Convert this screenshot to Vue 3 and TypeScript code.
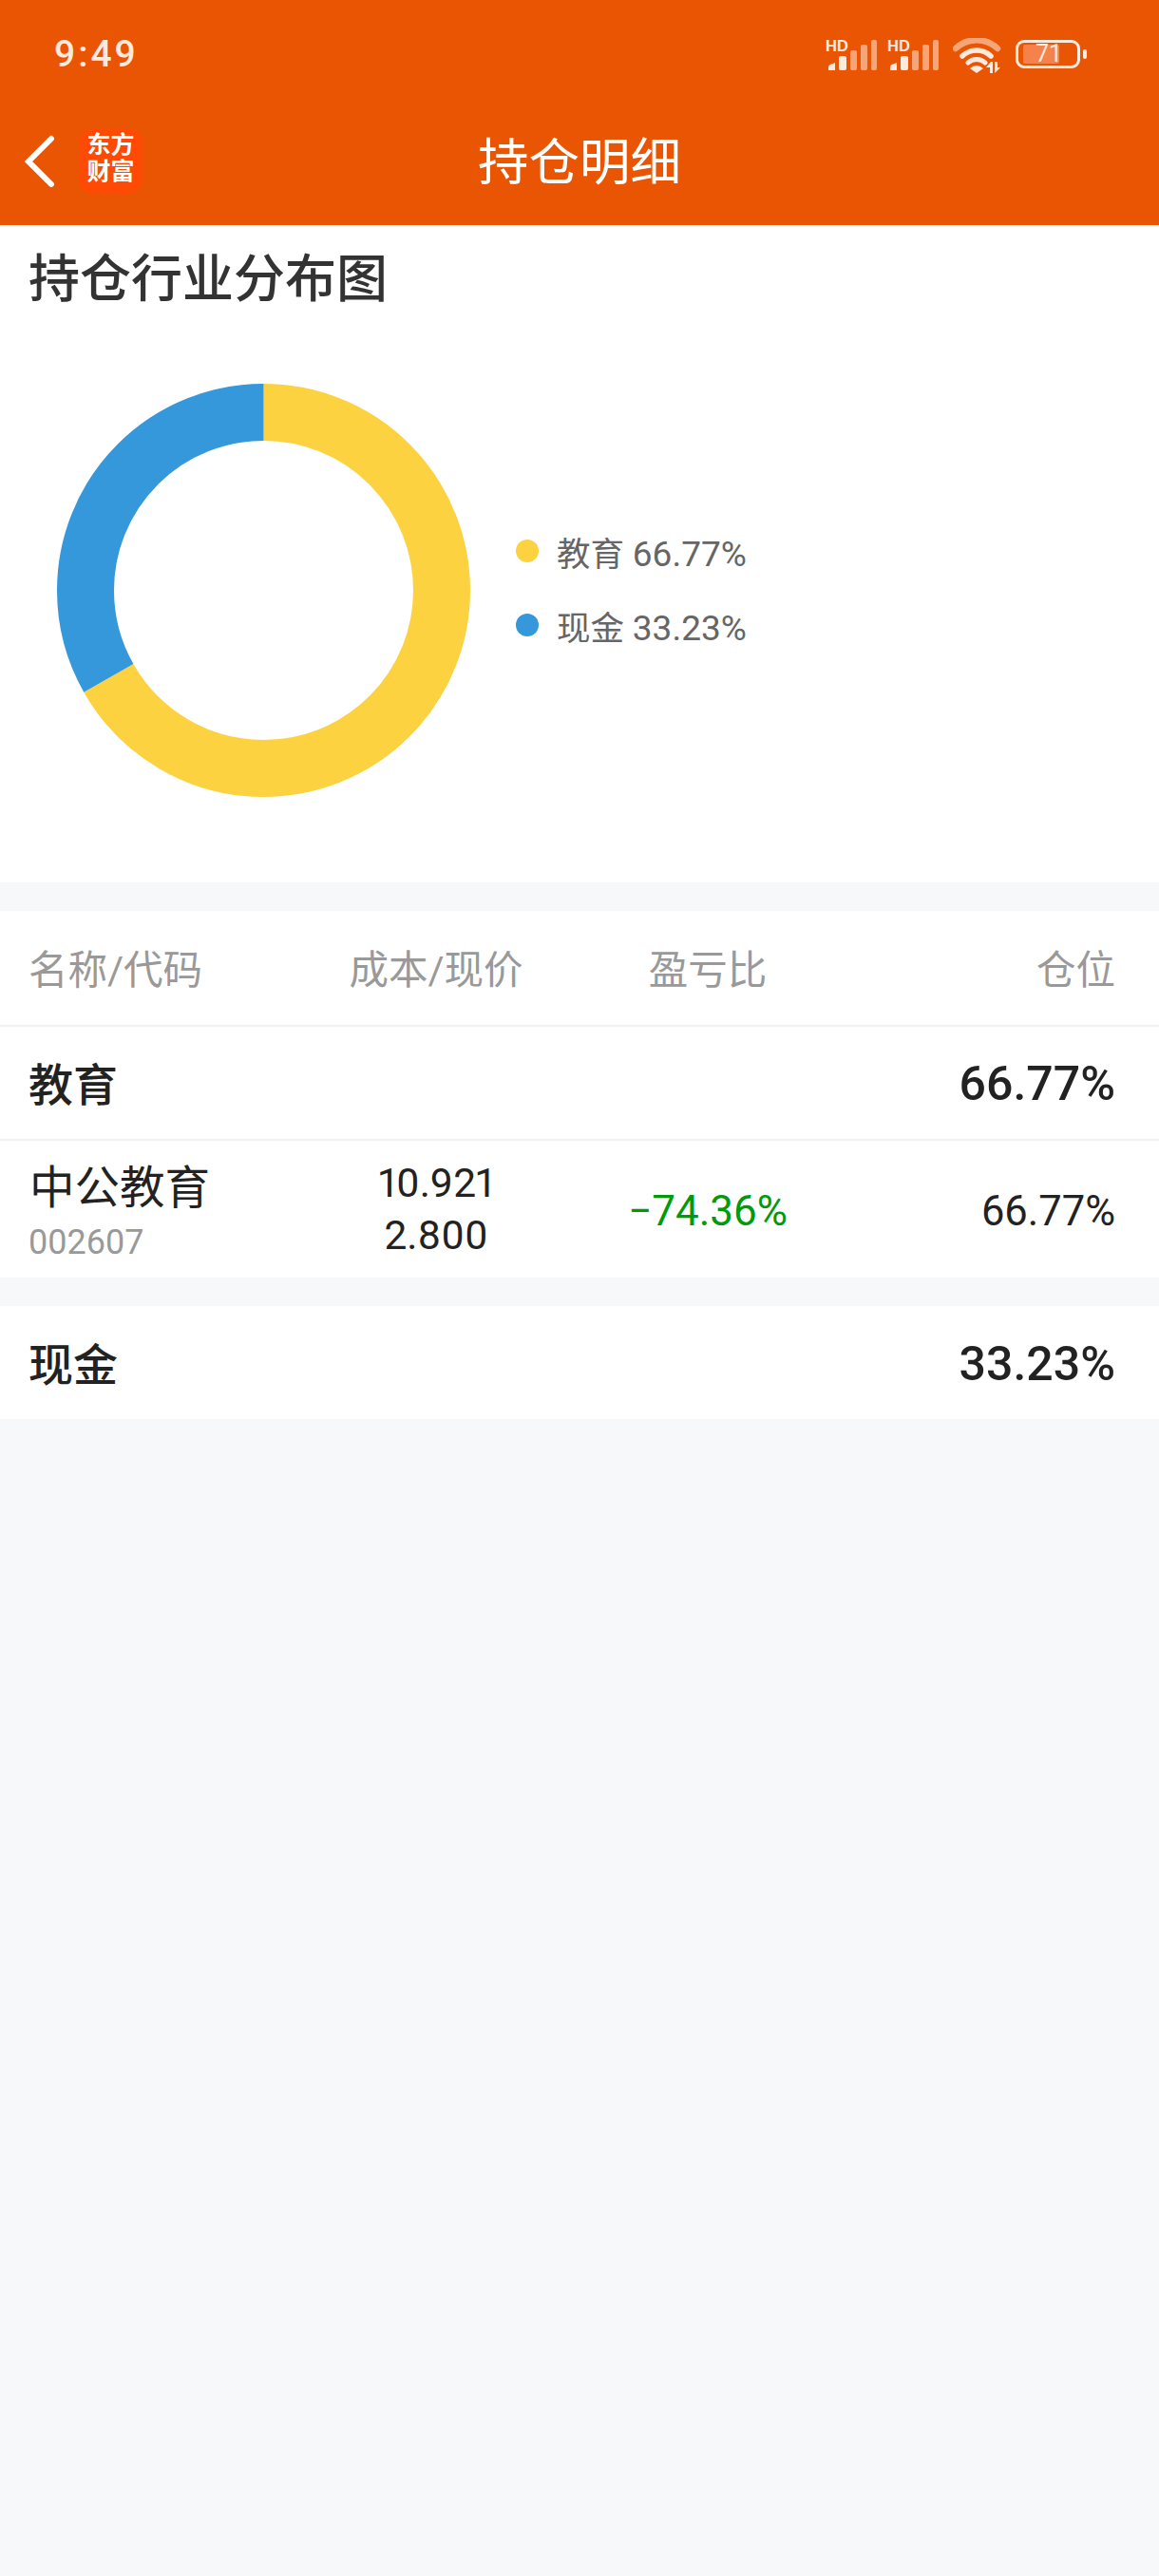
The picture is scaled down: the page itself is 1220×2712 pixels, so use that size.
<script setup lang="ts">
import { computed } from 'vue'

const legend = [
  { name: '教育', pct: 66.77, color: '#fcd240' },
  { name: '现金', pct: 33.23, color: '#3498db' },
]

const R = 187.5
const C = 2 * Math.PI * R
const slices = computed(() => {
  let used = 0
  return legend.map((l) => {
    const len = (l.pct / 100) * C
    const s = { color: l.color, dash: `${len} ${C - len}`, offset: -used }
    used += len
    return s
  })
})
</script>

<template>
  <div class="page">
    <header class="top">
      <div class="status">
        <span class="time">9:49</span>
        <div class="status-icons">
          <svg v-for="n in 2" :key="n" class="signal" width="56" height="34" viewBox="0 0 56 34">
            <text x="0" y="12" class="hd">HD</text>
            <path d="M3 32 V29 Q3 26 6 25.5 L10 24 V32 Z" fill="#fdeadf" />
            <rect x="14" y="17" width="8" height="15" rx="2" fill="#fdeadf" />
            <rect x="26" y="11" width="7" height="21" rx="2" fill="#f6a578" />
            <rect x="37" y="5" width="7" height="27" rx="2" fill="#f6a578" />
            <rect x="48" y="0" width="6" height="32" rx="2" fill="#f6a578" />
          </svg>
          <svg class="wifi" width="52" height="38" viewBox="0 0 52 38">
            <path d="M3 11 A 32 32 0 0 1 47 11" fill="none" stroke="#f6a578" stroke-width="6.5" stroke-linecap="round" />
            <path d="M10 19 A 22 22 0 0 1 40 19" fill="none" stroke="#fdeadf" stroke-width="5.5" stroke-linecap="round" />
            <path d="M16 26 A 13 13 0 0 1 34 26" fill="none" stroke="#fdeadf" stroke-width="5" stroke-linecap="round" />
            <path d="M18 32 Q25 26 32 32 L25 37 Z" fill="#fdeadf" />
            <path d="M35 31 L40 25 H42 V37 H39 V31 Z" fill="#fdeadf" />
            <path d="M44 25 H47 V31 H50 L44 37 Z" fill="#fdeadf" />
          </svg>
          <div class="battery">
            <div class="battery-body">
              <div class="battery-fill"></div>
              <span class="battery-num">71</span>
            </div>
            <div class="battery-nub"></div>
          </div>
        </div>
      </div>
      <nav class="nav">
        <svg class="back" width="34" height="56" viewBox="0 0 34 56">
          <path d="M29 4 L5 28 L29 52" fill="none" stroke="#fff" stroke-width="6" stroke-linecap="round" stroke-linejoin="miter" />
        </svg>
        <div class="logo">
          <span>东方</span>
          <span>财富</span>
        </div>
        <h1 class="nav-title">持仓明细</h1>
      </nav>
    </header>

    <section class="chart-card">
      <h2 class="chart-title">持仓行业分布图</h2>
      <div class="chart-body">
        <svg class="donut" width="435" height="435" viewBox="0 0 435 435">
          <circle
            v-for="(s, i) in slices"
            :key="i"
            cx="217.5"
            cy="217.5"
            :r="R"
            fill="none"
            :stroke="s.color"
            stroke-width="60"
            :stroke-dasharray="s.dash"
            :stroke-dashoffset="s.offset"
            transform="rotate(-90 217.5 217.5)"
          />
        </svg>
        <ul class="legend">
          <li v-for="l in legend" :key="l.name">
            <i class="dot" :style="{ background: l.color }"></i>
            <span>{{ l.name }} <span class="legend-pct">{{ l.pct }}%</span></span>
          </li>
        </ul>
      </div>
    </section>

    <section class="table">
      <div class="row head">
        <span>名称/代码</span>
        <span class="c">成本/现价</span>
        <span class="c">盈亏比</span>
        <span class="r">仓位</span>
      </div>
      <div class="row group line">
        <span class="group-name">教育</span>
        <span class="group-pct">66.77%</span>
      </div>
      <div class="row stock line">
        <div class="stock-name">
          <div class="name">中公教育</div>
          <div class="code">002607</div>
        </div>
        <div class="c prices">
          <div>10.921</div>
          <div>2.800</div>
        </div>
        <div class="c down">−74.36%</div>
        <div class="r pos">66.77%</div>
      </div>
    </section>

    <section class="table cash">
      <div class="row group">
        <span class="group-name">现金</span>
        <span class="group-pct">33.23%</span>
      </div>
    </section>
  </div>
</template>

<style>
html,
body {
  margin: 0;
  background: #f7f8fa;
}
</style>

<style scoped>
.page {
  min-height: 2712px;
  background: #f7f8fa;
  font-family: Roboto, "Noto Sans CJK SC", sans-serif;
}
.top {
  height: 237px;
  background: #ea5504;
}
.status {
  height: 108px;
  display: flex;
  align-items: center;
  justify-content: space-between;
  padding: 0 76px 0 57px;
  box-sizing: border-box;
}
.time {
  font-size: 39px;
  font-weight: 500;
  letter-spacing: 3px;
  color: #fdeadf;
  line-height: 1;
  margin-top: 7px;
}
.status-icons {
  display: flex;
  align-items: flex-start;
  margin-top: 11px;
}
.signal {
  margin-right: 9px;
  overflow: visible;
}
.hd {
  font-family: "Liberation Sans", sans-serif;
  font-size: 16.5px;
  font-weight: 700;
  fill: #fdeadf;
}
.wifi {
  margin-left: 4px;
  margin-top: -2px;
}
.battery {
  display: flex;
  align-items: center;
  margin-left: 14px;
}
.battery-body {
  position: relative;
  width: 68px;
  height: 30px;
  border: 3px solid #fdeadf;
  border-radius: 9px;
  box-sizing: border-box;
}
.battery-fill {
  position: absolute;
  left: 5px;
  top: 2px;
  width: 38px;
  height: 20px;
  background: #f4824a;
  border-radius: 2px;
}
.battery-num {
  position: absolute;
  left: 2px;
  right: 0;
  top: 0;
  bottom: 0;
  text-align: center;
  font-size: 25px;
  line-height: 24px;
  color: #fdeadf;
}
.battery-nub {
  width: 4px;
  height: 10px;
  margin-left: 3px;
  background: #fdeadf;
  border-radius: 2px;
}
.nav {
  position: relative;
  height: 129px;
  display: flex;
  align-items: center;
  padding-left: 25px;
}
.back {
  flex: none;
  margin-top: -6px;
}
.logo {
  width: 67px;
  height: 67px;
  margin-left: 24px;
  margin-top: -7px;
  padding-bottom: 4px;
  box-sizing: border-box;
  background: #ff4a05;
  border-radius: 14px;
  color: #fff;
  font-size: 25px;
  font-weight: 700;
  line-height: 28px;
  display: flex;
  flex-direction: column;
  align-items: center;
  justify-content: center;
}
.nav-title {
  position: absolute;
  left: 0;
  right: 0;
  top: 29px;
  margin: 0;
  text-align: center;
  color: #fff;
  font-size: 53.5px;
  font-weight: 400;
  line-height: 70px;
}
.chart-card {
  height: 692px;
  background: #fff;
  padding: 0 0 0 30px;
  box-sizing: border-box;
}
.chart-title {
  margin: 0;
  padding-top: 20px;
  font-size: 54px;
  font-weight: 500;
  line-height: 76px;
  color: #333;
}
.chart-body {
  display: flex;
  align-items: flex-start;
  margin-top: 71px;
  padding-left: 30px;
}
.donut {
  display: block;
  flex: none;
}
.legend {
  list-style: none;
  margin: 150px 0 0 48px;
  padding: 0;
  display: flex;
  flex-direction: column;
  gap: 26px;
}
.legend li {
  display: flex;
  align-items: center;
  gap: 19px;
  height: 52px;
  font-size: 35.5px;
  color: #666;
}
.legend-pct {
  font-size: 37px;
}
.dot {
  width: 24px;
  height: 24px;
  border-radius: 50%;
}
.table {
  margin-top: 30px;
  background: #fff;
}
.row {
  display: grid;
  grid-template-columns: repeat(4, 1fr);
  align-items: center;
  padding: 0 46px 0 30px;
}
.line {
  border-top: 2px solid #f0f1f3;
}
.head {
  height: 117px;
  padding-bottom: 3px;
  font-size: 41.5px;
  color: #999;
}
.c {
  text-align: center;
}
.r {
  text-align: right;
}
.group {
  height: 115px;
  padding-bottom: 3px;
  display: flex;
  justify-content: space-between;
  color: #222;
}
.group-name {
  font-size: 47px;
  font-weight: 500;
}
.group-pct {
  font-size: 50px;
  font-weight: 500;
  margin-top: 5px;
}
.stock {
  height: 146px;
  font-size: 43.5px;
  color: #222;
  box-sizing: border-box;
}
.stock-name {
  margin-top: 7px;
}
.stock-name .name {
  font-size: 47.5px;
  line-height: 62px;
  padding-left: 1px;
}
.stock-name .code {
  font-size: 36px;
  line-height: 52px;
  color: #999;
}
.prices {
  font-size: 42.5px;
  font-variant-numeric: proportional-nums;
  line-height: 55px;
}
.down {
  font-size: 44px;
  color: #009a0a;
  margin-top: 4px;
}
.pos {
  margin-top: 4px;
}
.cash .group {
  height: 116px;
}
</style>
